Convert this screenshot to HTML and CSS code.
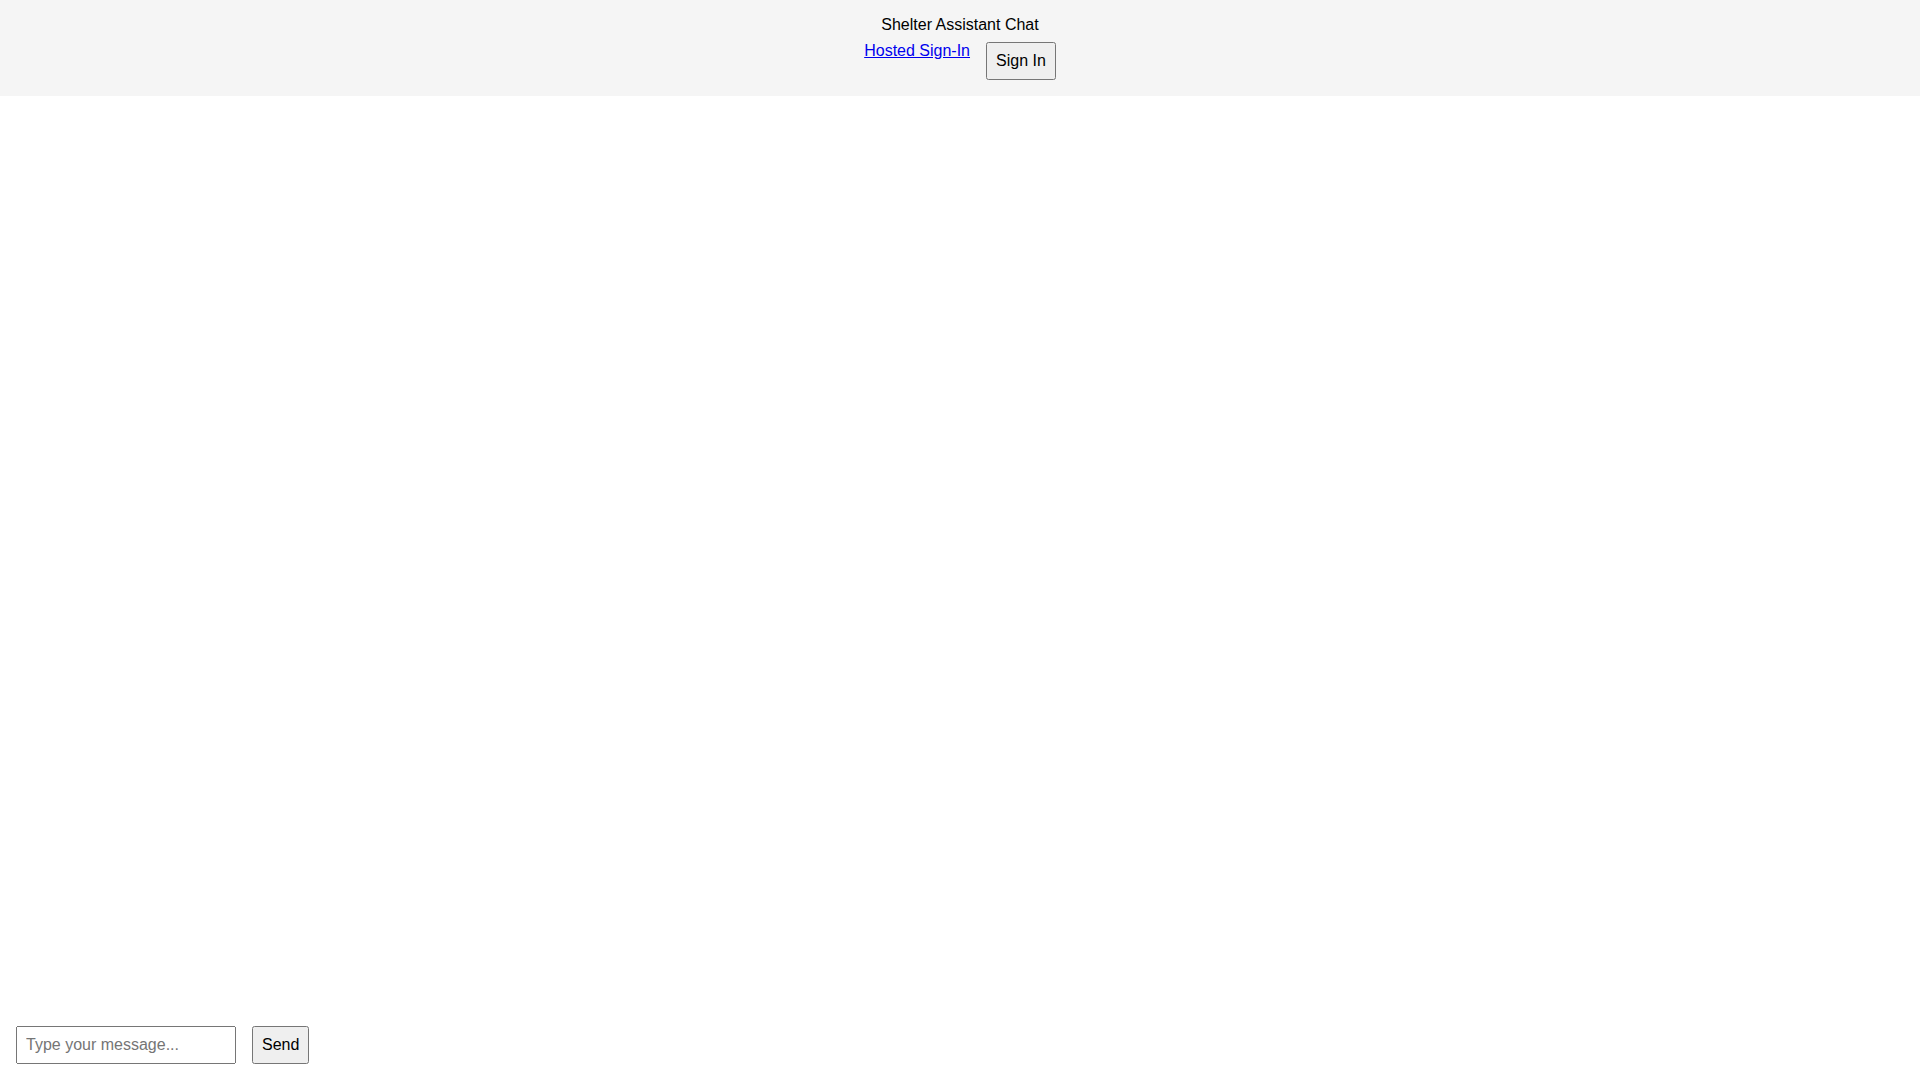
FILE: index.html
```html
<!DOCTYPE html>
<html lang="en">

<head>
	<meta charset="utf-8">
	<title>Shelter Assistant Chat</title>
	<link rel="stylesheet" href="styles.css">
</head>

<body>
	<header>
		<div>Shelter Assistant Chat</div>
		<div class="auth">
			<a href="#">Hosted Sign-In</a>
			<button id="signIn" type="button">Sign In</button>
		</div>
	</header>

	<main id="chat"></main>

	<form id="inputArea">
		<input id="message" type="text" placeholder="Type your message..." aria-label="Message">
		<button type="submit">Send</button>
	</form>
</body>

</html>
```

FILE: styles.css
```css
body {
	display: flex;
	flex-direction: column;
	height: 100vh;
	margin: 0;
	font-family: Arial, "Liberation Sans", sans-serif;
}

header {
	padding: 16px;
	background-color: #f5f5f5;
	text-align: center;
}

.auth {
	display: flex;
	justify-content: center;
	gap: 16px;
	margin-top: 8px;
}

#chat {
	flex: 1;
	padding: 16px;
	overflow-y: auto;
}

#inputArea {
	display: flex;
	gap: 16px;
	padding: 16px;
}

input,
button {
	padding: 8px;
	font-family: inherit;
	font-size: 16px;
}

#message {
	width: 200px;
}
```
